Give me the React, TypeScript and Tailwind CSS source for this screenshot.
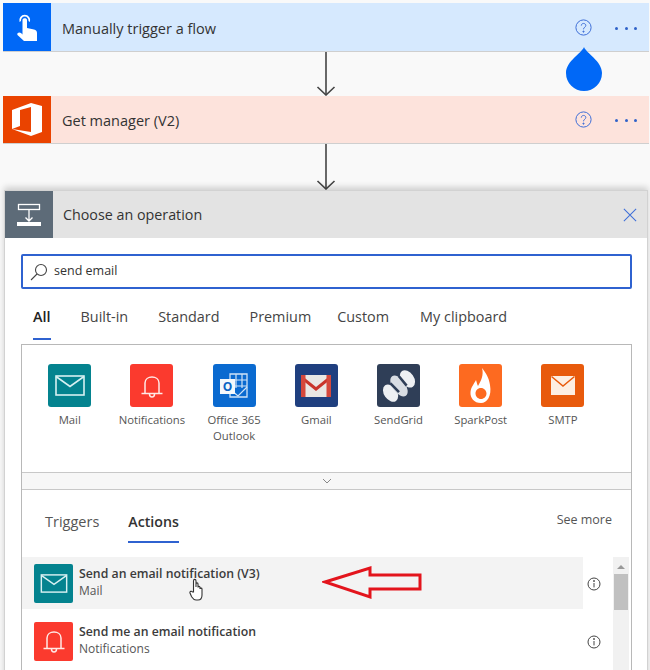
import React from "react";

const font = { fontFamily: '"Open Sans", "Noto Sans", sans-serif' };

function MailGlyph({ w = 30, h = 21, stroke = "#d8f0f2" }: { w?: number; h?: number; stroke?: string }) {
  return (
    <svg width={w} height={h} viewBox="0 0 30 21" fill="none" stroke={stroke} strokeWidth="1.6">
      <rect x="1" y="1" width="28" height="19" />
      <path d="M1 1.5 L15 11.5 L29 1.5" />
    </svg>
  );
}

function BellGlyph() {
  return (
    <svg width="24" height="26" viewBox="0 0 24 26" fill="none" stroke="#ffe9e6" strokeWidth="1.5">
      <path d="M5 20 V10 C5 2 19 2 19 10 V20" />
      <path d="M1.5 20.5 H22.5" />
      <path d="M9.5 21 C9.5 25 14.5 25 14.5 21" />
    </svg>
  );
}

function OutlookGlyph() {
  return (
    <svg width="30" height="30" viewBox="0 0 30 30" fill="none">
      <path d="M11 3 H28 V15 L28 26 H11 Z" stroke="#cfe3f7" strokeWidth="1.3" />
      <path d="M11 9 H28 M11 15 H28 M17 3 V17 M23 3 V17" stroke="#cfe3f7" strokeWidth="1.2" />
      <path d="M12 19 L19 25 L28 16" stroke="#cfe3f7" strokeWidth="1.2" />
      <rect x="1" y="8" width="15" height="15" fill="#f4f8fc" />
      <text x="8.5" y="20" textAnchor="middle" fontSize="12" fontWeight="700" fill="#0a63c4" style={font}>O</text>
    </svg>
  );
}

function GmailGlyph() {
  return (
    <svg width="30" height="24" viewBox="0 0 30 24">
      <rect x="0" y="1" width="30" height="22" fill="#e9e7e4" />
      <path d="M0 1 L15 13 L30 1 V5 L15 17 L0 5 Z" fill="#c9352b" />
      <rect x="0" y="1" width="4.5" height="22" fill="#d5483c" />
      <rect x="25.5" y="1" width="4.5" height="22" fill="#d5483c" />
    </svg>
  );
}

function SendGridGlyph() {
  return (
    <svg width="38" height="34" viewBox="0 0 38 34">
      <g transform="rotate(-35 19 17)">
        <ellipse cx="8" cy="18" rx="6.5" ry="9.5" fill="#eef0f3" />
        <ellipse cx="19" cy="17" rx="6.5" ry="12" fill="#d9dde3" />
        <ellipse cx="30" cy="16" rx="6.5" ry="9.5" fill="#eef0f3" />
        <path d="M13.5 10 L15.5 22 M24.5 9 L25.5 21" stroke="#2f3e57" strokeWidth="2.6" />
      </g>
    </svg>
  );
}

function SparkGlyph() {
  return (
    <svg width="22" height="36" viewBox="0 0 22 36">
      <path
        fillRule="evenodd"
        fill="#fff"
        d="M12 0 C15 4 19 9 20 17 C22 28 17 35 11 35 C4 35 0 30 0.5 24 C1 19 4 16 6 12 C7 15 7 16 8 18 C11 13 14 7 12 0 Z M11 20 C7.5 20 5.5 22.5 5.5 25.5 C5.5 28.5 8 31 11 31 C14 31 16.5 28.5 16.5 25.5 C16.5 22.5 14 20 11 20 Z"
      />
    </svg>
  );
}

function SmtpGlyph() {
  return (
    <svg width="24" height="19" viewBox="0 0 24 19">
      <rect width="24" height="19" fill="#fdeee2" />
      <path d="M0.5 0.5 L12 10 L23.5 0.5" fill="none" stroke="#e85a0c" strokeWidth="1.4" />
    </svg>
  );
}

function Help() {
  return (
    <svg width="17" height="17" viewBox="0 0 17 17" fill="none" stroke="#3f6fd8" strokeWidth="1">
      <circle cx="8.5" cy="8.5" r="7.6" />
      <path d="M6.3 6.6 C6.3 3.7 10.8 3.8 10.8 6.5 C10.8 8.2 8.5 8.3 8.5 10.3" />
      <circle cx="8.5" cy="12.6" r="0.6" fill="#3f6fd8" />
    </svg>
  );
}

function Dots() {
  return (
    <div className="flex gap-[6.5px] pt-[2px]">
      <span className="h-[3px] w-[3px] rounded-full bg-[#2f62c9]" />
      <span className="h-[3px] w-[3px] rounded-full bg-[#2f62c9]" />
      <span className="h-[3px] w-[3px] rounded-full bg-[#2f62c9]" />
    </div>
  );
}

function DownArrow({ h }: { h: number }) {
  return (
    <div className="flex shrink-0 justify-center pl-[1px]" style={{ height: h }}>
      <svg width="22" height={h} viewBox={`0 0 22 ${h}`} fill="none" stroke="#444" strokeWidth="1.6">
        <path d={`M11 0 V${h - 1}`} />
        <path d={`M2.5 ${h - 9} L11 ${h - 1} L19.5 ${h - 9}`} />
      </svg>
    </div>
  );
}

function FlowCard({ title, bg, icon, h, children }: { title: string; bg: string; icon: string; h: string; children: React.ReactNode }) {
  return (
    <div className={`ml-[3px] mr-[1px] flex shrink-0 items-center border-b border-[#cfcfcf] ${h} ${bg}`}>
      <div className={`flex h-full w-[48px] shrink-0 items-center justify-center ${icon}`}>{children}</div>
      <span className="ml-[11px] flex-1 pt-[3px] text-[14.5px] text-[#333]">{title}</span>
      <div className="mr-[12px] flex items-center gap-[23px]">
        <Help />
        <Dots />
      </div>
    </div>
  );
}

const connectors = [
  { label: "Mail", bg: "bg-[#04838f]", glyph: <MailGlyph /> },
  { label: "Notifications", bg: "bg-[#fb3a2e]", glyph: <BellGlyph /> },
  { label: "Office 365 Outlook", bg: "bg-[#0a6ad0]", glyph: <OutlookGlyph /> },
  { label: "Gmail", bg: "bg-[#1f3f7f]", glyph: <GmailGlyph /> },
  { label: "SendGrid", bg: "bg-[#2f3e57]", glyph: <SendGridGlyph /> },
  { label: "SparkPost", bg: "bg-[#fd6a20]", glyph: <SparkGlyph /> },
  { label: "SMTP", bg: "bg-[#e85a0c]", glyph: <SmtpGlyph /> },
];

function ActionRow({ title, sub, bg, hover, glyph }: { title: string; sub: string; bg: string; hover?: boolean; glyph: React.ReactNode }) {
  return (
    <div className={`flex h-[52px] w-[561px] items-center pl-[12px] pr-[4px] ${hover ? "bg-[#f3f3f3]" : ""}`}>
      <div className={`flex h-[39px] w-[39px] shrink-0 items-center justify-center rounded-[2px] ${bg}`}>{glyph}</div>
      <div className="ml-[6px] flex-1 pb-[3px] leading-[17px]">
        <div className="text-[12.3px] font-semibold text-[#3b3b3b]">{title}</div>
        <div className="text-[12px] text-[#555]">{sub}</div>
      </div>
    </div>
  );
}

function Info() {
  return (
    <svg width="14" height="14" viewBox="0 0 14 14" fill="none" stroke="#444" strokeWidth="1">
      <circle cx="7" cy="7" r="6" />
      <path d="M7 6 V10.4" />
      <circle cx="7" cy="4" r="0.5" fill="#444" />
    </svg>
  );
}

export default function App() {
  return (
    <div className="relative flex h-[670px] w-[650px] flex-col overflow-hidden bg-[#f9f9f9] pt-[3px]" style={font}>
      <FlowCard title="Manually trigger a flow" bg="bg-[#d6e9fe]" icon="bg-[#0068f7]" h="h-[49px]">
        <svg width="20" height="27" viewBox="0 0 20 27" fill="#fff">
          <path d="M2.5 8 A5.5 5.5 0 1 1 13 8 L11.5 7 A3.8 3.8 0 1 0 4 7 Z" />
          <path d="M5.5 6 C5.5 3.8 10 3.8 10 6 V14 L17 15.5 C19 16 20 17 20 19 V27 H7 L0.5 21 C-0.5 19 2 17.5 4 19 L5.5 20.5 Z" />
        </svg>
      </FlowCard>
      <DownArrow h={44} />
      <FlowCard title="Get manager (V2)" bg="bg-[#fde3dc]" icon="bg-[#ea4300]" h="h-[48px]">
        <svg width="30" height="33" viewBox="0 0 30 33" fill="#fff">
          <path fillRule="evenodd" d="M0 26 V7 L19 0 L30 3 V29 L19 33 Z M19 4 L8 7 V23 L0 26 L19 29 Z" />
        </svg>
      </FlowCard>
      <DownArrow h={46} />

      <div className="ml-[4px] mr-[2px] flex flex-1 flex-col border border-[#d2d2d2] bg-white shadow-[0_-3px_6px_rgba(0,0,0,0.16)]">
        <div className="flex h-[47px] shrink-0 items-center bg-[#e3e3e3]">
          <div className="flex h-full w-[48px] items-center justify-center bg-[#5d6b78]">
            <svg width="26" height="26" viewBox="0 0 26 26" fill="none" stroke="#fff">
              <rect x="2.5" y="2.5" width="21" height="5" strokeWidth="1.3" />
              <path d="M13 8 V19 M9.5 15.5 L13 19 L16.5 15.5" strokeWidth="1.3" />
              <rect x="1" y="20" width="24" height="4" fill="#fff" strokeWidth="0" />
            </svg>
          </div>
          <span className="ml-[10px] flex-1 text-[14.3px] text-[#333]">Choose an operation</span>
          <svg className="mr-[10px]" width="14" height="14" viewBox="0 0 16 16" stroke="#3f6fd8" strokeWidth="1.2">
            <path d="M1 1 L15 15 M15 1 L1 15" />
          </svg>
        </div>

        <div className="px-[16px] pt-[16px]">
          <div className="flex h-[35px] w-[611px] items-center rounded-[2px] border-2 border-[#2f62d0] bg-white pl-[7px]">
            <svg width="18" height="18" viewBox="0 0 18 18" fill="none" stroke="#444" strokeWidth="1.1">
              <circle cx="11" cy="7" r="5.5" />
              <path d="M7 11 L1 17" />
            </svg>
            <span className="ml-[6px] text-[12.5px] text-[#333]">send email</span>
          </div>

          <div className="mt-[13px] flex h-[38px] w-[611px] items-start pl-[12px] pt-[4px] text-[14.4px] text-[#444]">
            <div className="relative h-[34px] font-semibold text-[#222]">
              All
              <span className="absolute bottom-0 left-0 h-[2px] w-full bg-[#2f62d0]" />
            </div>
            <span className="ml-[30px]">Built-in</span>
            <span className="ml-[30px]">Standard</span>
            <span className="ml-[30px]">Premium</span>
            <span className="ml-[26px]">Custom</span>
            <span className="ml-[31px]">My clipboard</span>
          </div>

          <div className="mt-[4px] w-[611px] border border-[#b8b8b8]">
            <div className="flex h-[127px] items-start gap-[5.7px] pl-[9.5px] pt-[19px]">
              {connectors.map((c) => (
                <div key={c.label} className="flex w-[76.5px] flex-col items-center">
                  <div className={`flex h-[43px] w-[43px] items-center justify-center rounded-[3px] ${c.bg}`}>{c.glyph}</div>
                  <span className="mt-[5px] text-center text-[11.3px] leading-[16px] text-[#555]">{c.label}</span>
                </div>
              ))}
            </div>
            <div className="flex h-[18px] items-center justify-center border-y border-[#c8c8c8] bg-[#f7f7f7]">
              <svg width="10" height="6" viewBox="0 0 10 6" fill="none" stroke="#888">
                <path d="M1 1 L5 5 L9 1" />
              </svg>
            </div>

            <div className="relative h-[190px]">
              <div className="flex h-[67px] items-start justify-between pl-[23px] pr-[19px] pt-[21px] text-[14.5px] text-[#555]">
                <div className="flex gap-[29px]">
                  <span>Triggers</span>
                  <div className="relative h-[32px] text-[14.2px] font-semibold text-[#333]">
                    Actions
                    <span className="absolute bottom-0 left-0 h-[2px] w-full bg-[#2f62d0]" />
                  </div>
                </div>
                <span className="text-[12.5px]">See more</span>
              </div>

              <ActionRow title="Send an email notification (V3)" sub="Mail" bg="bg-[#04838f]" hover glyph={<MailGlyph w={28} h={19} />} />
              <div className="h-[6px]" />
              <ActionRow title="Send me an email notification" sub="Notifications" bg="bg-[#fb3a2e]" glyph={<BellGlyph />} />

              <div className="absolute left-[565px] top-[87px]"><Info /></div>
              <div className="absolute left-[565px] top-[145px]"><Info /></div>

              <div className="absolute right-[2px] top-[67px] flex h-[123px] w-[16px] flex-col items-center bg-[#f1f1f1]">
                <svg className="mt-[8px]" width="8" height="4" viewBox="0 0 8 4" fill="#999">
                  <path d="M4 0 L8 4 H0 Z" />
                </svg>
                <div className="mt-[5px] h-[36px] w-[14px] bg-[#c0c0c0]" />
              </div>
            </div>
          </div>
        </div>
      </div>

      {/* Drop marker over the canvas */}
      <svg className="absolute left-[566px] top-[47px]" width="36" height="44" viewBox="0 0 36 44" fill="#0068f7">
        <path d="M18 0 C20 6 36 14 36 26 A18 18 0 0 1 0 26 C0 14 16 6 18 0 Z" />
      </svg>

      {/* Red annotation arrow */}
      <svg className="absolute left-[322px] top-[565px]" width="102" height="36" viewBox="0 0 102 36" fill="none" stroke="#e3141c" strokeWidth="3">
        <path d="M3 17 L48 3 V10 H98 V24 H48 V32 Z" />
      </svg>

      {/* Pointer cursor */}
      <svg className="absolute left-[189px] top-[578px]" width="16" height="24" viewBox="0 0 16 24" fill="#fff" stroke="#333" strokeWidth="1.1">
        <path d="M4.5 14 V3 C4.5 0.8 7 0.8 7 3 V9 V6 C7 4.5 9 4.5 9 6 V9.5 C9 8 11 8 11 9.5 V11 C11 9.8 13 9.8 13 11 V17 C13 20 11.5 22 9 22 H7 C4.5 22 3.5 20 2.5 18.5 L1 15 C0.5 13.5 2.5 12.5 3.5 14 Z" />
      </svg>
    </div>
  );
}
